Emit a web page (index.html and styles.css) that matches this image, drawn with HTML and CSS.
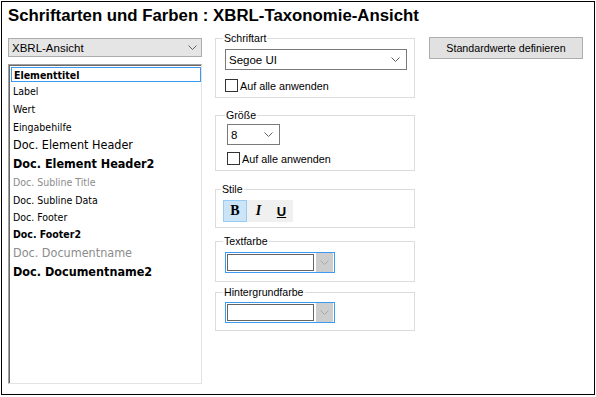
FILE: index.html
```html
<!DOCTYPE html>
<html lang="de">
<head>
<meta charset="utf-8">
<title>Schriftarten und Farben</title>
<link rel="stylesheet" href="styles.css">
</head>
<body>
<div class="frame">
  <h1 class="title">Schriftarten und Farben : XBRL-Taxonomie-Ansicht</h1>
  <div class="main">
    <div class="left">
      <div class="select view-select">
        <span>XBRL-Ansicht</span>
        <svg class="chev" width="9" height="5" viewBox="0 0 9 5"><polyline points="0.5,0.5 4.5,4.5 8.5,0.5" fill="none" stroke="#606060" stroke-width="1"/></svg>
      </div>
      <ul class="list">
        <li class="it sm b sel" style="height:16px">Elementtitel</li>
        <li class="it sm" style="height:18px">Label</li>
        <li class="it sm" style="height:18px">Wert</li>
        <li class="it sm" style="height:17px">Eingabehilfe</li>
        <li class="it lg" style="height:18px">Doc. Element Header</li>
        <li class="it lg b" style="height:20px">Doc. Element Header2</li>
        <li class="it sm gray" style="height:18px">Doc. Subline Title</li>
        <li class="it sm" style="height:17px">Doc. Subline Data</li>
        <li class="it sm" style="height:17px">Doc. Footer</li>
        <li class="it sm b" style="height:18px">Doc. Footer2</li>
        <li class="it lg gray" style="height:19px">Doc. Documentname</li>
        <li class="it lg b" style="height:19px">Doc. Documentname2</li>
      </ul>
    </div>
    <div class="mid">
      <fieldset class="grp g-font">
        <legend>Schriftart</legend>
        <div class="select combo font-combo">
          <span>Segoe UI</span>
          <svg class="chev" width="9" height="5" viewBox="0 0 9 5"><polyline points="0.5,0.5 4.5,4.5 8.5,0.5" fill="none" stroke="#606060" stroke-width="1"/></svg>
        </div>
        <label class="check c1"><span class="box"></span>Auf alle anwenden</label>
      </fieldset>
      <fieldset class="grp g-size">
        <legend>Größe</legend>
        <div class="select combo size-combo">
          <span>8</span>
          <svg class="chev" width="9" height="5" viewBox="0 0 9 5"><polyline points="0.5,0.5 4.5,4.5 8.5,0.5" fill="none" stroke="#606060" stroke-width="1"/></svg>
        </div>
        <label class="check c2"><span class="box"></span>Auf alle anwenden</label>
      </fieldset>
      <fieldset class="grp g-style">
        <legend>Stile</legend>
        <div class="toolbar">
          <span class="tb on tb-b">B</span>
          <span class="tb tb-i">I</span>
          <span class="tb tb-u">U</span>
        </div>
      </fieldset>
      <fieldset class="grp g-text">
        <legend>Textfarbe</legend>
        <div class="color">
          <span class="swatch"></span>
          <span class="cbtn"><svg width="9" height="5" viewBox="0 0 9 5"><polyline points="0.5,0.5 4.5,4.5 8.5,0.5" fill="none" stroke="#a8a8a8" stroke-width="1"/></svg></span>
        </div>
      </fieldset>
      <fieldset class="grp g-bg">
        <legend>Hintergrundfarbe</legend>
        <div class="color">
          <span class="swatch"></span>
          <span class="cbtn"><svg width="9" height="5" viewBox="0 0 9 5"><polyline points="0.5,0.5 4.5,4.5 8.5,0.5" fill="none" stroke="#a8a8a8" stroke-width="1"/></svg></span>
        </div>
      </fieldset>
    </div>
    <div class="right">
      <button class="btn">Standardwerte definieren</button>
    </div>
  </div>
</div>
</body>
</html>
```
FILE: styles.css
```css
* { box-sizing: border-box; }
html, body { margin: 0; padding: 0; background: #fff; }
body { font-family: "Liberation Sans", Arial, sans-serif; font-size: 11px; color: #000; }

.frame {
  margin: 1px;
  width: 594px;
  height: 394px;
  border: 1px solid #000;
  background: #fff;
  padding: 5px 0 0 6px;
}
.title {
  margin: 0;
  font-size: 16.8px;
  font-weight: bold;
  line-height: 18px;
  height: 18px;
  white-space: nowrap;
}
.main {
  display: flex;
  margin-top: 6px;
}
.left { width: 194px; padding-top: 7px; }
.mid { width: 200px; margin-left: 13px; }
.right { margin-left: 14px; padding-top: 6px; }

.select {
  display: flex;
  align-items: center;
  justify-content: space-between;
  border: 1px solid #acacac;
  background: #e5e5e5;
  padding: 0 4px 0 3px;
}
.view-select { height: 19px; font-size: 11.5px; }
.chev { display: block; flex: none; }

.list {
  list-style: none;
  margin: 7px 0 0;
  padding: 0;
  height: 320px;
  border-top: 1px solid #a0a0a0;
  border-left: 1px solid #a0a0a0;
  border-right: 1px solid #e3e3e3;
  border-bottom: 1px solid #e3e3e3;
  box-shadow: inset 1px 1px 0 #696969;
  padding: 1px 0 0 1px;
  font-family: "DejaVu Sans Condensed", "DejaVu Sans", sans-serif;
}
.it {
  display: flex;
  align-items: center;
  padding-left: 3px;
  white-space: nowrap;
  color: #000;
}
.sm { font-size: 10.5px; }
.lg { font-size: 12.5px; }
.b { font-weight: bold; }
.gray { color: #8c8c8c; }
.sel {
  margin: 1px 0 0 1px;
  padding-left: 2px;
  border: 1px solid #3c9bf0;
  height: 15px !important;
}

.grp {
  margin: 0;
  border: 1px solid #dcdcdc;
  padding: 0 7px 0 9px;
  min-width: 0;
}
.grp legend {
  padding: 0 1px;
  margin-left: -2px;
  line-height: 14px;
  font-size: 10.6px;
}
.g-font { padding-top: 4px; padding-bottom: 5px; }
.g-size { margin-top: 10px; padding-top: 2px; padding-bottom: 5px; padding-left: 11px; }
.g-style { margin-top: 11px; padding-top: 4px; padding-bottom: 5px; padding-left: 7px; }
.g-text { margin-top: 6px; padding-top: 4px; padding-bottom: 8px; }
.g-bg { margin-top: 3px; padding-top: 3px; padding-bottom: 7px; }

.combo {
  background: #fff;
  border: 1px solid #7a7a7a;
  height: 21px;
  font-size: 11.5px;
  padding: 0 6px 0 3px;
}
.size-combo { width: 53px; }

.check {
  display: flex;
  align-items: center;
  margin-top: 9px;
  height: 13px;
  white-space: nowrap;
  font-size: 10.8px;
}
.c2 { margin-top: 7px; }
.box {
  width: 13px;
  height: 13px;
  border: 1px solid #333;
  background: #fff;
  margin-right: 2px;
  flex: none;
}

.toolbar {
  display: flex;
  width: 70px;
  height: 22px;
  background: #f0f0f0;
}
.tb {
  width: 23px;
  height: 22px;
  display: flex;
  align-items: center;
  justify-content: center;
  font-family: "Liberation Serif", serif;
  font-size: 14px;
  font-weight: bold;
}
.tb.on { background: #cce4f7; border: 1px solid #99ccf3; width: 24px; }
.tb-i { font-style: italic; }
.tb-u { font-family: "Liberation Sans", sans-serif; text-decoration: underline; font-size: 13px; }

.color {
  display: flex;
  width: 110px;
  height: 21px;
  border: 1px solid #3c9bf0;
  padding: 1px;
  background: #fff;
}
.swatch {
  width: 88px;
  height: 17px;
  border: 1px solid #646464;
  background: #fff;
}
.cbtn {
  margin-left: 2px;
  width: 17px;
  height: 19px;
  margin-top: -1px;
  background: #cdcdcd;
  display: flex;
  align-items: center;
  justify-content: center;
}

.btn {
  width: 154px;
  height: 22px;
  background: #e1e1e1;
  border: 1px solid #adadad;
  font-family: "Liberation Sans", Arial, sans-serif;
  font-size: 10.7px;
  color: #000;
  padding: 0;
}
```
